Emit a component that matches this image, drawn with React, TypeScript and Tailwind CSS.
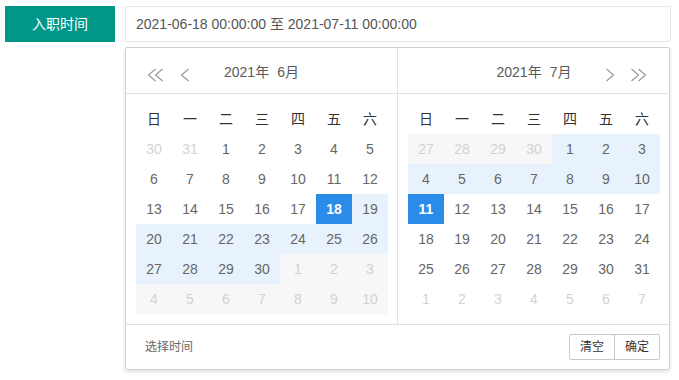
type Cell = { d: number; k: 'n' | 'o' | 'og' | 'r' | 's' };

const F = { fontFamily: '"Liberation Sans", "Noto Sans CJK SC", sans-serif' };

const weeks = ['日', '一', '二', '三', '四', '五', '六'];

function row(nums: number[], kinds: string): Cell[] {
  return nums.map((d, i) => ({ d, k: kinds.split(',')[i] as Cell['k'] }));
}

const june: Cell[][] = [
  row([30, 31, 1, 2, 3, 4, 5], 'o,o,n,n,n,n,n'),
  row([6, 7, 8, 9, 10, 11, 12], 'n,n,n,n,n,n,n'),
  row([13, 14, 15, 16, 17, 18, 19], 'n,n,n,n,n,s,r'),
  row([20, 21, 22, 23, 24, 25, 26], 'r,r,r,r,r,r,r'),
  row([27, 28, 29, 30, 1, 2, 3], 'r,r,r,r,og,og,og'),
  row([4, 5, 6, 7, 8, 9, 10], 'og,og,og,og,og,og,og'),
];

const july: Cell[][] = [
  row([27, 28, 29, 30, 1, 2, 3], 'og,og,og,og,r,r,r'),
  row([4, 5, 6, 7, 8, 9, 10], 'r,r,r,r,r,r,r'),
  row([11, 12, 13, 14, 15, 16, 17], 's,n,n,n,n,n,n'),
  row([18, 19, 20, 21, 22, 23, 24], 'n,n,n,n,n,n,n'),
  row([25, 26, 27, 28, 29, 30, 31], 'n,n,n,n,n,n,n'),
  row([1, 2, 3, 4, 5, 6, 7], 'o,o,o,o,o,o,o'),
];

const kindCls: Record<Cell['k'], string> = {
  n: 'text-[#666]',
  o: 'text-[#d2d2d2]',
  og: 'text-[#d2d2d2] bg-[#f7f7f7]',
  r: 'text-[#666] bg-[#e8f2fd]',
  s: 'text-white bg-[#2b8be8] font-bold',
};

// thin chevrons like the laydate iconfont
function Chev({ dir, double }: { dir: 'l' | 'r'; double?: boolean }) {
  const w = double ? 17 : 10;
  const one = (x: number) =>
    dir === 'l' ? `${x + 8.5},1 ${x + 1.5},7 ${x + 8.5},13` : `${x + 1.5},1 ${x + 8.5},7 ${x + 1.5},13`;
  return (
    <svg width={w} height={14} viewBox={`0 0 ${w} 14`} fill="none" stroke="#9a9a9a" strokeWidth="1.2">
      <polyline points={one(0)} />
      {double && <polyline points={one(7)} />}
    </svg>
  );
}

function Panel({ month, rows, left }: { month: string; rows: Cell[][]; left?: boolean }) {
  return (
    <div className={left ? 'w-[272px] border-r border-[#e2e2e2]' : 'flex-1'}>
      <div className="relative flex h-[46px] items-center justify-center border-b border-[#e2e2e2] pt-[3px] text-[14px] text-[#5a5a5a]">
        {left ? (
          <>
            <span className="absolute left-[21px] top-[20px]"><Chev dir="l" double /></span>
            <span className="absolute left-[54px] top-[20px]"><Chev dir="l" /></span>
          </>
        ) : (
          <>
            <span className="absolute left-[207px] top-[20px]"><Chev dir="r" /></span>
            <span className="absolute left-[232px] top-[20px]"><Chev dir="r" double /></span>
          </>
        )}
        <span className="flex gap-[8px]">
          <span>2021年</span>
          <span>{month}</span>
        </span>
      </div>
      <div className="p-[10px]">
        <div className="grid grid-cols-[repeat(7,36px)]">
          {weeks.map((w) => (
            <div key={w} className="flex h-[30px] items-center justify-center text-[14px] text-[#333]">{w}</div>
          ))}
          {rows.flat().map((c, i) => (
            <div key={i} className={`flex h-[30px] items-center justify-center text-[14px] ${kindCls[c.k]}`}>
              {c.d}
            </div>
          ))}
        </div>
      </div>
    </div>
  );
}

export default function App() {
  return (
    <div className="h-[380px] w-[679px] bg-white" style={F}>
      <div className="flex gap-[10px] pl-[5px] pt-[6px]">
        <div className="flex h-[36px] w-[110px] items-center justify-center bg-[#009688] text-[14px] text-white">入职时间</div>
        <div className="flex h-[36px] w-[546px] items-center rounded-[2px] border border-[#e6e6e6] pl-[10px] text-[14px] text-[#555]">
          2021-06-18 00:00:00 至 2021-07-11 00:00:00
        </div>
      </div>
      <div className="ml-[125px] mt-[5px] w-[545px] rounded-[2px] border border-[#d2d2d2] bg-white shadow-[0_2px_4px_rgba(0,0,0,0.12)]">
        <div className="flex">
          <Panel month="6月" rows={june} left />
          <Panel month="7月" rows={july} />
        </div>
        <div className="flex h-[45px] items-center justify-between border-t border-[#e2e2e2] pl-[19px] pr-[9px]">
          <span className="text-[12px] text-[#666]">选择时间</span>
          <div className="flex">
            <button className="h-[26px] w-[46px] rounded-l-[2px] border border-[#c9c9c9] text-[12px] text-[#333]">清空</button>
            <button className="-ml-px h-[26px] w-[46px] rounded-r-[2px] border border-[#c9c9c9] text-[12px] text-[#333]">确定</button>
          </div>
        </div>
      </div>
    </div>
  );
}
